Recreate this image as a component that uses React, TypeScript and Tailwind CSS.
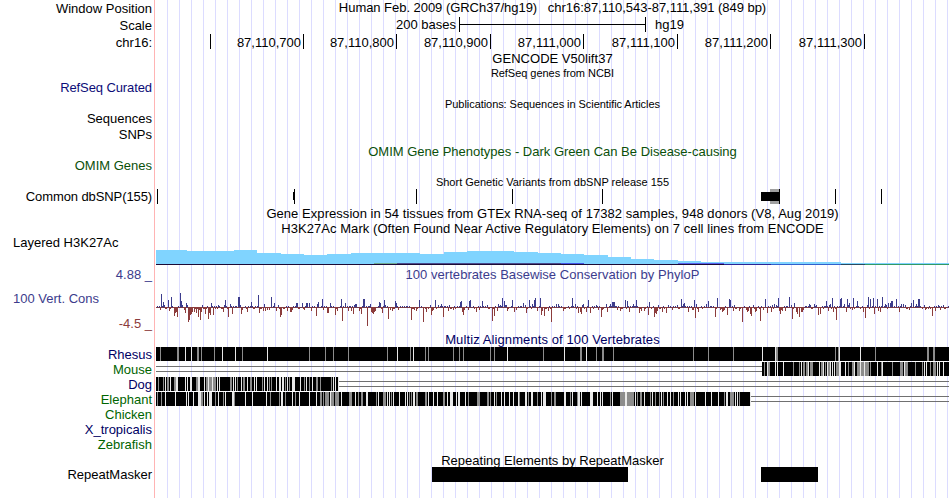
import type { ReactNode } from "react";

// Everything inside the track panel is drawn in page pixels (panel starts at 155)
const PANEL_X = 155;
const PANEL_W = 795;

interface RowProps {
  className: string;
  label?: string;
  labelClass?: string;
  children?: ReactNode;
}

const positions: [string, string][] = [
  ["", "w-[56px]"],
  ["87,110,700", "w-[93px]"],
  ["87,110,800", "w-[93px]"],
  ["87,110,900", "w-[94px]"],
  ["87,111,000", "w-[93px]"],
  ["87,111,100", "w-[94px]"],
  ["87,111,200", "w-[93px]"],
  ["87,111,300", "w-[94px]"],
];

const snps = [157, 294, 416, 512, 602, 779, 835, 881];

// [start, end, top]
const h3k27ac = [
  [156, 187, 250],
  [187, 234, 251],
  [234, 257, 250],
  [257, 281, 253],
  [281, 304, 254],
  [304, 327, 255],
  [327, 351, 254],
  [351, 420, 253],
  [420, 444, 254],
  [444, 467, 252],
  [467, 514, 251],
  [514, 538, 252],
  [538, 561, 253],
  [561, 584, 254],
  [584, 608, 255],
  [608, 631, 257],
  [631, 654, 259],
  [654, 678, 260],
  [678, 701, 261],
  [701, 841, 262],
  [841, 949, 263],
];

// [start, end, y, color]
const cellLines: [number, number, number, string][] = [
  [374, 397, 263, "#6fa98f"],
  [397, 561, 263, "#4b4a8c"],
  [561, 584, 263, "#4355e8"],
  [678, 724, 263, "#5560ee"],
  [156, 724, 264, "#1c0a35"],
  [724, 771, 264, "#2c2496"],
  [771, 841, 264, "#3060cc"],
  [841, 865, 264, "#2a4a60"],
  [865, 949, 264, "#339966"],
];

// position:score, up is conserved, down is fast evolving
const phyloP = `160:-3 161:13 163:5 164:2 168:7 169:-4 171:10 172:1 174:-9 175:-6 176:-5 177:-10 179:-1 180:14
181:6 182:2 183:-1 184:-3 185:-6 186:4 187:2 188:-15 189:-13 190:-8 191:-7 192:-5 193:-1 194:-5 195:-2 196:-6 197:-2 198:-10
199:-3 200:-13 201:-5 203:-2 205:-7 206:-2 208:-12 209:-6 210:-8 211:4 213:-8 215:-2 217:-2 218:2 221:-2 223:-5
224:2 225:7 228:-10 229:-1 230:3 232:-7 238:10 239:10 241:-7 242:-3 247:-5 251:5 253:-2 254:-2 258:12 259:-6 263:-4
264:3 265:-4 267:-3 269:-3 271:10 274:4 276:-4 280:-10 281:-8 283:-2 287:-4 290:-5 291:-5 292:-3 296:4 297:4 299:-2
302:4 304:-3 306:4 307:4 309:4 311:-4 316:-9 317:3 318:5 322:8 323:-3 327:-6 328:-6 330:4 335:-8 337:-4 341:8 342:-14
345:4 348:-4 351:-4 353:-7 355:3 356:3 359:-4 361:-7 363:8 364:8 367:-19 370:3 371:-5 372:-6 373:-7 374:-5 375:-4
379:5 380:4 381:-2 382:-6 384:7 385:2 388:-12 390:-3 392:-4 395:6 396:4 398:-3 411:-13 414:-3 416:-4 419:7
423:-15 425:-2 426:-5 428:-2 431:-8 432:-4 433:-3 435:7 438:2 441:3 443:-10 448:-4 453:-3 460:5 461:6 462:-5 463:-8
464:-3 468:-3 469:6 470:7 476:-5 479:-3 482:6 492:-14 494:-9 497:-4 498:3 500:2 502:9 504:6 505:2 507:-4 512:7
514:-5 516:-3 523:4 526:-6 529:7 532:3 534:7 535:9 537:-4 540:9 541:-8 542:-4 544:-9 548:-4 551:-15 556:3 558:3
563:-4 565:-2 572:9 575:3 576:-2 578:-6 580:-5 581:-7 583:3 586:-5 588:7 590:-6 593:-2 596:2 598:-3 601:-10 602:-3
606:3 607:-5 610:3 612:5 613:5 614:5 617:-3 620:-4 625:7 627:6 629:-5 633:3 636:7 639:-6 641:-4 644:-4 648:-8 649:5
651:-2 654:-10 655:-6 656:-7 657:-4 662:-5 666:-6 668:2 672:-3 681:8 683:3 684:4 688:-5 692:-3 693:-3 694:7
695:-11 696:3 698:-5 706:3 708:6 715:-10 717:9 720:-3 722:-5 723:-4 724:-3 727:-8 729:8 730:7 733:-4 739:-4 742:-15
746:-3 747:-5 748:-4 750:-7 751:-9 755:-5 756:-4 760:-14 763:-3 765:8 767:-6 771:-5 774:3 776:2 778:9 779:-4
780:-7 781:-3 782:-4 785:-4 789:10 792:-12 794:4 796:-5 797:-7 799:-10 801:-5 802:-5 803:-3 809:3 814:3 816:2 818:-8
820:-7 823:-2 826:6 828:-4 830:3 832:9 833:-5 836:-13 840:8 841:9 844:3 846:-5 847:8 849:4 852:-3 853:9 857:6 860:-2
863:-5 865:-11 868:10 870:8 873:9 874:-7 877:8 878:-4 880:-5 882:10 885:3 888:4 890:4 891:6 892:6 896:8 899:-5 901:3
903:3 909:-3 911:4 913:7 916:3 918:8 919:8 922:-2 925:-3 928:-2 932:-9 935:-4 938:2 940:-3`;

// low scores between the peaks
const background = [-1, -1, 1, -2, 0, 1, -1, 1, 2, -1, 0, 1, -2, 1, -1, -2, 1, 0, 1];

// start, shade (g = gray, w = white) and optional width
const rhesus =
  "160g 177g2 185w 191w 197g2 201g 214g 222w 235w 242g 267w 309g 325g 333g 348g 387g 397w 410g 413w 425g 428g 453g 459g 463g 490g 494g 507w 543g 564w 580g2 586w 596g 602g2 613g 693g 708g 733g 762w 775w 776g2 835g 838g 839w 860w 875g 927g2 933g2";

const mouse =
  "764g 767w 768g2 775w 777w 783w 793g 799g 801w 803g2 806g2 808w 810g3 819w 821g2 823w 825g 827w 828g2 830w 832w 834w 836g3 839w2 845w 848g 852g2 854w 857g3 860w 861g3 864w 865g 866g3 870g 877w 881g 882w 892g 900g3 904w 905g3 915g 922g 924w 926w 930g 933g3 937w 939w 943w";

const dog =
  "158g 163g 165w 167g2 170w 174g2 176w2 185w 187w 190w 191w 196g2 198w2 204w 206g2 208w 209g3 212w 213g3 217w 219w 230g2 233w 235w 237g 241w 243g2 247w 250g2 254w 256w 262g 264w 267w 269g 271g 276w 279w2 282w2 285g 287w 289g 292w3 300w 304g 306w 309g 312w 316g2 320g 331g 333w 335w";

const elephant =
  "157g 161g 165w 175w 186w 188w 193w 198w2 200w 201g2 204w 207w 209w2 211w 215g 218w 223g 225w 232w2 234g 245w 252w 266w 270g 279g 281w2 285g 292w 295g 299w 309w 316w 320g2 323g 325g4 330w 331g3 335g4 341w 349g3 355w 358g 361g2 366w2 376g 378w 383g3 387w 389w 391g 393w 399w 405w 407w 409g 411g 413w2 416g2 425g2 428w 433w 437w 443g2 447w 450w3 456w 458w2 465w 468g 477g3 487g2 490g 494w 496g 501w 504w 509w 513w 518w 519g 525w2 528g 531w2 537g 541w 543w2 545w 551g 554g2 564w2 570g 572w 577g 578w2 581w 590w3 597w 600w 602w 610g 612w 620g5 625w2 627g2 629g5 635w 637g 640g2 644w 650g 652w 655g 659g 661w 663g 667w 670w 673g 678w 680w 685w 687w 690g4 695w 705w 711w 718w 724g 726w2 730g4 735w 737w 739g";

function Row({ className, label, labelClass = "text-black", children }: RowProps) {
  return (
    <div className={`flex shrink-0 items-center ${className}`}>
      <div className={`w-[155px] shrink-0 pr-[3px] text-right ${labelClass}`}>
        {label}
      </div>
      <div className="flex h-full w-[795px] shrink-0 items-center">{children}</div>
    </div>
  );
}

function Title({ className = "", children }: { className?: string; children: ReactNode }) {
  return <div className={`w-full text-center ${className}`}>{children}</div>;
}

function Drawing({ y, h, children }: { y: number; h: number; children: ReactNode }) {
  return (
    <svg
      width={PANEL_W}
      height={h}
      viewBox={`${PANEL_X} ${y} ${PANEL_W} ${h}`}
      shapeRendering="crispEdges"
      className="block shrink-0"
    >
      {children}
    </svg>
  );
}

function ConservationPlot() {
  const scores = new Map<number, number>();
  phyloP.split(/\s+/).forEach((item) => {
    const [x, score] = item.split(":").map(Number);
    scores.set(x, score);
  });

  const bars = [];
  for (let x = 156; x < 949; x++) {
    const score = scores.get(x) ?? background[(x * 7) % background.length];
    if (score === 0) continue;
    bars.push(
      <rect
        key={x}
        x={x}
        y={score > 0 ? 307 - score : 307}
        width={1}
        height={Math.abs(score)}
        fill={score > 0 ? "#3c3c8c" : "#8c3c3c"}
      />
    );
  }

  return (
    <Drawing y={283} h={50}>
      <rect x={156} y={307} width={793} height={1} fill="#6f3c50" />
      {bars}
    </Drawing>
  );
}

function Alignment({ from, to, gaps, y }: { from: number; to: number; gaps: string; y: number }) {
  return (
    <Drawing y={y} h={15}>
      {(from > 156 || to < 949) && (
        <>
          <rect x={156} y={y + 4} width={793} height={1} fill="#707070" />
          <rect x={156} y={y + 9} width={793} height={1} fill="#707070" />
        </>
      )}
      <rect x={from} y={y} width={to - from} height={14} fill="#000" />
      {gaps.split(" ").map((gap) => {
        const [start, width] = gap.split(/[gw]/);
        return (
          <rect
            key={gap}
            x={Number(start)}
            y={y}
            width={Number(width || 1)}
            height={14}
            fill={gap.includes("g") ? "#8c8c8c" : "#e8e8e8"}
          />
        );
      })}
      {to < 949 && <rect x={to} y={y} width={1} height={14} fill="#e8e8e8" />}
    </Drawing>
  );
}

export default function App() {
  return (
    <div className="flex h-[498px] w-[950px] flex-col overflow-hidden whitespace-pre bg-white bg-[linear-gradient(#ffb4b4,#ffb4b4),repeating-linear-gradient(to_right,#dcdcff_0_1px,transparent_1px_12px)] bg-no-repeat font-['Liberation_Sans',Arial,sans-serif] text-[13px] leading-[15px] text-black [background-position:154px_0,167px_0] [background-size:1px_100%,783px_100%]">
      <Row className="h-[17px]" label="Window Position">
        <Title className="pb-[2px] tracking-[-0.04px]">
          Human Feb. 2009 (GRCh37/hg19)   chr16:87,110,543-87,111,391 (849 bp)
        </Title>
      </Row>
      <Row className="h-[17px]" label="Scale">
        <div className="w-[301px] pb-[2px] text-right">200 bases</div>
        <div className="ml-[3px] flex h-[15px] w-[187px] items-center self-start border-x border-black">
          <div className="h-px w-full bg-black" />
        </div>
        <div className="ml-[9px] pb-[2px]">hg19</div>
      </Row>
      <Row className="h-[17px]" label="chr16:">
        {positions.map(([text, width]) => (
          <div
            key={width + text}
            className={`h-[15px] self-start border-r border-black pr-[2px] pt-px text-right ${width}`}
          >
            {text}
          </div>
        ))}
      </Row>
      <Row className="h-[15px]">
        <Title className="tracking-[0.02px]">GENCODE V50lift37</Title>
      </Row>
      <Row className="h-[14px]">
        <Title className="text-[11px] tracking-[-0.04px]">RefSeq genes from NCBI</Title>
      </Row>
      <Row
        className="h-[16px]"
        label="RefSeq Curated"
        labelClass="pb-[2px] tracking-[-0.1px] text-[#0c0c78]"
      />
      <Row className="h-[16px]">
        <Title className="text-[11px] tracking-[-0.06px]">
          Publications: Sequences in Scientific Articles
        </Title>
      </Row>
      <Row className="h-[14px]" label="Sequences" labelClass="pb-[2px] text-black" />
      <Row className="h-[17px]" label="SNPs" />
      <Row className="h-[16px]">
        <Title className="text-[#0a500a]">
          OMIM Gene Phenotypes - Dark Green Can Be Disease-causing
        </Title>
      </Row>
      <Row className="h-[15px]" label="OMIM Genes" labelClass="pb-[2px] text-[#0a500a]" />
      <Row className="h-[15px]">
        <Title className="pt-[2px] text-[11px]">
          Short Genetic Variants from dbSNP release 155
        </Title>
      </Row>
      <Row className="h-[15px]" label="Common dbSNP(155)" labelClass="tracking-[-0.1px] text-black">
        <Drawing y={189} h={15}>
          <rect x={770} y={189} width={9} height={15} fill="#a0a0a0" />
          <rect x={761} y={192} width={18} height={9} />
          <rect x={293} y={192} width={1} height={8} />
          {snps.map((x) => (
            <rect key={x} x={x} y={189} width={1} height={15} />
          ))}
        </Drawing>
      </Row>
      <Row className="h-[18px]">
        <Title className="tracking-[0.055px]">
          Gene Expression in 54 tissues from GTEx RNA-seq of 17382 samples, 948 donors (V8, Aug 2019)
        </Title>
      </Row>
      <Row className="h-[13px]">
        <Title className="tracking-[0.058px]">
          H3K27Ac Mark (Often Found Near Active Regulatory Elements) on 7 cell lines from ENCODE
        </Title>
      </Row>
      <div className="flex h-[32px] shrink-0">
        <div className="w-[155px] pl-[13px]">Layered H3K27Ac</div>
        <Drawing y={235} h={32}>
          {h3k27ac.map(([start, end, top]) => (
            <rect key={start} x={start} y={top} width={end - start} height={264 - top} fill="#80d4ff" />
          ))}
          {cellLines.map(([start, end, y, color]) => (
            <rect key={`${start}-${y}`} x={start} y={y} width={end - start} height={1} fill={color} />
          ))}
        </Drawing>
      </div>
      <Row className="h-[16px]" label="4.88 _" labelClass="pb-[2px] text-[#3c3c8c]">
        <Title className="pb-[2px] tracking-[0.04px] text-[#3c3c8c]">
          100 vertebrates Basewise Conservation by PhyloP
        </Title>
      </Row>
      <div className="flex h-[50px] shrink-0">
        <div className="flex w-[155px] flex-col justify-between pb-[2px] pt-[8px]">
          <div className="pl-[13px] text-[#3c3c8c]">100 Vert. Cons</div>
          <div className="pr-[3px] text-right text-[#8c3c3c]">-4.5 _</div>
        </div>
        <ConservationPlot />
      </div>
      <Row className="h-[14px]">
        <Title className="pb-px tracking-[0.1px] text-[#000064]">
          Multiz Alignments of 100 Vertebrates
        </Title>
      </Row>
      <Row className="h-[15px]" label="Rhesus" labelClass="text-[#000064]">
        <Alignment from={156} to={949} gaps={rhesus} y={347} />
      </Row>
      <Row className="h-[15px]" label="Mouse" labelClass="text-[#006400]">
        <Alignment from={762} to={949} gaps={mouse} y={362} />
      </Row>
      <Row className="h-[15px]" label="Dog" labelClass="text-[#000064]">
        <Alignment from={156} to={338} gaps={dog} y={377} />
      </Row>
      <Row className="h-[15px]" label="Elephant" labelClass="text-[#006400]">
        <Alignment from={156} to={750} gaps={elephant} y={392} />
      </Row>
      <Row className="h-[15px]" label="Chicken" labelClass="text-[#006400]" />
      <Row className="h-[15px]" label="X_tropicalis" labelClass="text-[#000064]" />
      <Row className="h-[15px]" label="Zebrafish" labelClass="text-[#006400]" />
      <Row className="h-[15px] pt-px">
        <Title>Repeating Elements by RepeatMasker</Title>
      </Row>
      <Row className="h-[15px]" label="RepeatMasker">
        <Drawing y={467} h={15}>
          <rect x={432} y={467} width={196} height={15} />
          <rect x={761} y={467} width={57} height={15} />
        </Drawing>
      </Row>
    </div>
  );
}
